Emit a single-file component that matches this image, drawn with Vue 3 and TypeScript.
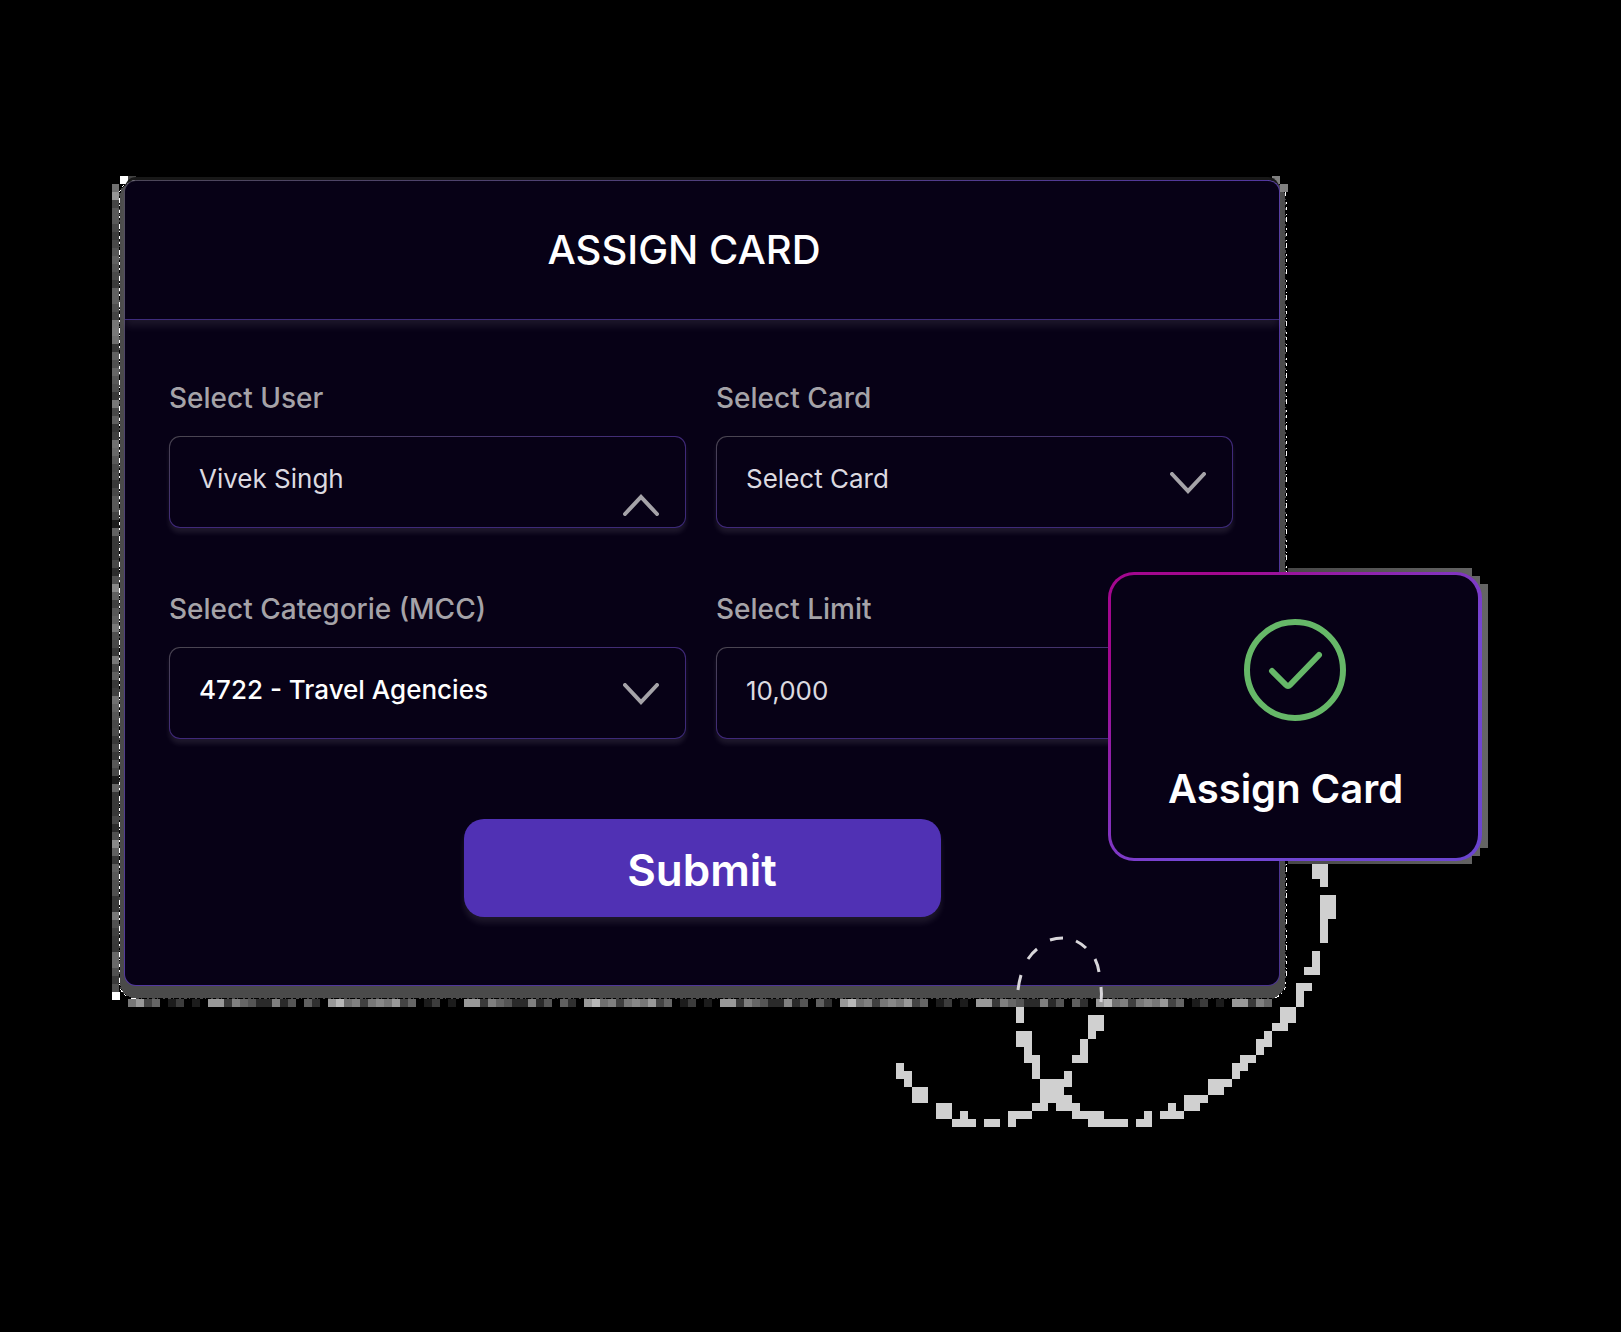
<script setup lang="ts">
import { ref } from 'vue'

const user = ref('Vivek Singh')
const card = ref('Select Card')
const category = ref('4722 - Travel Agencies')
const limit = ref('10,000')

/* Everything in the pixel trim sits on an 8px cell. */
const CELL = 8

const grey = (hex: string) => `#${hex}${hex}${hex}`

const leftEdge = (
  '70 95 45 58 58 48 3c 48 55 60 55 4a 3a 60 60 50 44 75 78 70 38 60 50 66 58 50 38 78 48 60 38 40 70 68 ' +
  '58 48 4c 38 48 58 58 44 1c 62 38 38 38 48 2c 50 88 60 40 58 60 78 50 48 38 78 48 60 38 40 70 62 58 48 ' +
  '4c 38 48 38 58 48 1c 66 38 38 38 48 2c 50 88 60 38 60 58 50 50 38 38 78 50 40 3a 38 68 68 50 3a 50 ff'
).split(' ')

const bottomPattern = (
  '77 99 44 66 00 1c 3c 00 1c 00 99 99 3a 80 66 55 2a 2a 80 2a 55 00 60 30 00 99 b8 70 80 40 77 88'
).split(' ')

/* Trail runs: row, first column, number of columns. */
const trail: number[][] = [
  [0, 54, 2], [1, 54, 2], [2, 55, 1], [4, 55, 2], [5, 55, 2], [6, 55, 2], [7, 55, 1], [8, 55, 1], [9, 55, 1],
  [11, 54, 1], [12, 54, 1], [13, 53, 2], [15, 52, 2], [16, 52, 1], [17, 52, 1], [18, 50, 2], [19, 50, 2],
  [20, 49, 2], [21, 48, 1], [22, 47, 2], [23, 47, 1], [24, 45, 2], [25, 44, 2], [26, 44, 1], [27, 41, 3],
  [28, 41, 2], [29, 38, 3], [30, 38, 2], [30, 36, 1], [31, 35, 3], [31, 33, 1], [32, 32, 2],
  [18, 17, 1], [19, 17, 1], [21, 17, 2], [22, 17, 2], [23, 18, 1], [24, 18, 2], [25, 19, 1], [26, 19, 1],
  [27, 20, 3], [28, 20, 3], [29, 20, 4], [26, 23, 1], [27, 23, 1], [30, 19, 2], [30, 22, 3], [31, 16, 3],
  [31, 24, 4], [32, 16, 1], [32, 26, 5],
  [19, 26, 2], [20, 26, 2], [21, 26, 1], [22, 25, 1], [23, 25, 1], [24, 24, 2],
  [25, 2, 1], [26, 2, 2], [27, 3, 1], [28, 4, 2], [29, 4, 2], [30, 7, 2], [31, 7, 2], [31, 10, 1],
  [32, 9, 3], [32, 13, 2]
]
</script>

<template>
  <main class="page">
    <div class="scene">
      <svg class="halo" aria-hidden="true">
        <defs>
          <pattern id="edge-noise" :width="CELL * 32" :height="CELL" patternUnits="userSpaceOnUse">
            <rect
              v-for="(tone, i) in bottomPattern"
              :key="i"
              :x="i * CELL"
              :width="CELL"
              :height="CELL"
              :fill="grey(tone)"
            />
          </pattern>
        </defs>
        <rect class="halo-fill" width="100%" height="100%" rx="17" />
        <rect class="speckle dark" width="100%" height="100%" rx="17" />
        <rect class="speckle light" width="100%" height="100%" rx="17" />
      </svg>
      <svg class="edge edge-left" aria-hidden="true">
        <rect
          v-for="(tone, i) in leftEdge"
          :key="i"
          :y="i * CELL"
          :width="i === leftEdge.length - 1 ? 8 : 7"
          :height="CELL"
          :fill="grey(tone)"
        />
      </svg>
      <svg class="edge edge-bottom" aria-hidden="true">
        <rect width="100%" height="8" fill="url(#edge-noise)" />
      </svg>
      <svg class="edge corner-left" aria-hidden="true">
        <rect width="8" height="8" fill="#fff" />
        <rect x="8" width="8" height="4" fill="#444" />
      </svg>
      <svg class="edge corner-right" aria-hidden="true">
        <rect width="8" height="8" fill="#808080" />
        <rect x="8" y="8" width="8" height="8" fill="#808080" />
      </svg>

      <form class="panel" @submit.prevent>
        <header class="panel-head">
          <h1>ASSIGN CARD</h1>
        </header>
        <div class="panel-body">
          <div class="fields">
            <div class="field">
              <label for="user">Select User</label>
              <div class="control">
                <select id="user" v-model="user">
                  <option>Vivek Singh</option>
                </select>
                <svg class="chevron open" viewBox="0 0 36 22" aria-hidden="true">
                  <path d="M2 2 18 19 34 2" />
                </svg>
              </div>
            </div>
            <div class="field">
              <label for="card">Select Card</label>
              <div class="control">
                <select id="card" v-model="card">
                  <option>Select Card</option>
                </select>
                <svg class="chevron" viewBox="0 0 36 22" aria-hidden="true">
                  <path d="M2 2 18 19 34 2" />
                </svg>
              </div>
            </div>
            <div class="field">
              <label for="category">Select Categorie (MCC)</label>
              <div class="control">
                <select id="category" v-model="category" class="strong">
                  <option>4722 - Travel Agencies</option>
                </select>
                <svg class="chevron" viewBox="0 0 36 22" aria-hidden="true">
                  <path d="M2 2 18 19 34 2" />
                </svg>
              </div>
            </div>
            <div class="field">
              <label for="limit">Select Limit</label>
              <div class="control">
                <input id="limit" v-model="limit" type="text" />
              </div>
            </div>
          </div>
          <button class="submit" type="submit">Submit</button>
        </div>
      </form>

      <svg class="trail" viewBox="0 0 456 264" aria-hidden="true">
        <g shape-rendering="crispEdges" fill="#d0d0d0">
          <rect
            v-for="([row, col, span], i) in trail"
            :key="i"
            :x="(col - 2) * CELL"
            :y="row * CELL"
            :width="span * CELL"
            :height="CELL"
          />
        </g>
        <path
          class="dashes"
          d="M122 127Q123 119 125 112M132 96Q136 90 141 86M154 77Q160 75 167 75M180 78Q186 81 190 85M199 96Q202 102 203 109M205 124Q206 131 205 139"
        />
      </svg>

      <svg class="toast-shadow" viewBox="0 0 200 296" aria-hidden="true">
        <defs>
          <linearGradient id="toast-edge">
            <stop offset="0" stop-color="#484848" />
            <stop offset="1" stop-color="#656565" />
          </linearGradient>
        </defs>
        <path fill="url(#toast-edge)" d="M0 0H184V8H192V16H200V280H192V288H184V296H0Z" />
      </svg>

      <section class="toast" role="status">
        <svg class="tick" viewBox="0 0 102 102" aria-hidden="true">
          <circle cx="51" cy="51" r="48" />
          <path d="M28 52 42 66Q44 68 46 66L75 36" />
        </svg>
        <p>Assign Card</p>
      </section>
    </div>
  </main>
</template>

<style>
html,
body {
  background: #000;
}
</style>

<style scoped>
.page {
  box-sizing: border-box;
  min-height: 100vh;
  padding: 180px 341px 180px 124px;
  background: #000;
  overflow: hidden;
  font-family: Inter, "Liberation Sans", sans-serif;
}

.scene {
  position: relative;
}

.halo,
.edge,
.trail,
.toast-shadow {
  position: absolute;
  overflow: visible;
  pointer-events: none;
}

.halo {
  top: 0;
  left: -5px;
  width: calc(100% + 11px);
  height: calc(100% + 13px);
}

.halo-fill {
  fill: #4a4a4a;
}

.speckle {
  fill: none;
  stroke-width: 1;
  shape-rendering: crispEdges;
}

.speckle.dark {
  stroke: #000;
  stroke-width: 2;
  stroke-dasharray: 3 2 5 1 2 3;
}

.speckle.light {
  stroke: #fff;
  stroke-dasharray: 3 4 1 2 5 6 2 3;
}

.edge {
  shape-rendering: crispEdges;
}

.edge-left {
  top: 4px;
  left: -12px;
  width: 8px;
  height: 100%;
}

.edge-bottom {
  left: 4px;
  bottom: -21px;
  width: calc(100% - 12px);
  height: 8px;
}

.corner-left {
  top: -4px;
  left: -4px;
  width: 16px;
  height: 8px;
}

.corner-right {
  top: -4px;
  right: -8px;
  width: 16px;
  height: 16px;
}

.panel {
  position: relative;
  box-sizing: border-box;
  border: 1px solid transparent;
  border-radius: 12px;
  background:
    linear-gradient(#070116, #070116) padding-box,
    linear-gradient(to bottom right, #4c4758, #5237a0 50%, #4b3490) border-box;
  box-shadow: 0 -4px 0 -1px #181818;
}

.panel-head {
  display: flex;
  align-items: center;
  justify-content: center;
  height: 139px;
  padding-right: 36px;
  box-sizing: border-box;
  border-bottom: 1px solid #3e2c7c;
  box-shadow: 0 6px 8px rgba(255, 255, 255, 0.09);
}

h1 {
  margin: 0;
  color: #fff;
  font-size: 40px;
  font-weight: 500;
  line-height: 48px;
}

.panel-body {
  display: flex;
  flex-direction: column;
  align-items: center;
  padding: 60px 46px 68px 44px;
}

.fields {
  display: grid;
  grid-template-columns: 1fr 1fr;
  gap: 63px 30px;
  width: 100%;
}

.field {
  display: flex;
  flex-direction: column;
  gap: 20px;
  min-width: 0;
}

label {
  color: #a5a3a8;
  font-size: 28px;
  font-weight: 500;
  line-height: 36px;
}

.control {
  position: relative;
  display: flex;
}

select,
input {
  appearance: none;
  box-sizing: border-box;
  width: 100%;
  height: 92px;
  margin: 0;
  padding: 0 80px 6px 29px;
  border: 1px solid transparent;
  border-radius: 11px;
  outline: none;
  background:
    linear-gradient(#070116, #070116) padding-box,
    linear-gradient(to bottom right, #4a4650, #40297a 50%, #3c2a78) border-box;
  box-shadow: 0 5px 5px rgba(255, 255, 255, 0.09);
  color: #dcdae0;
  font: 400 26px/32px Inter, "Liberation Sans", sans-serif;
}

select.strong {
  color: #fff;
  font-weight: 500;
}

.chevron {
  position: absolute;
  top: 36px;
  right: 27px;
  width: 36px;
  height: 22px;
  fill: none;
  stroke: #a5a3a8;
  stroke-width: 4;
  stroke-linecap: round;
  pointer-events: none;
}

.chevron.open {
  top: auto;
  bottom: 12px;
  rotate: 180deg;
}

.submit {
  width: 477px;
  max-width: 100%;
  height: 98px;
  margin: 80px 0 0 2px;
  padding: 4px 0 0;
  border: 0;
  border-radius: 20px;
  background: #5031b4;
  box-shadow: 0 6px 6px rgba(255, 255, 255, 0.09);
  color: #fff;
  font: 600 44px/52px Inter, "Liberation Sans", sans-serif;
}

.trail {
  right: -72px;
  bottom: -141px;
  width: 456px;
  height: 264px;
}

.dashes {
  fill: none;
  stroke: #d8d6da;
  stroke-width: 3;
}

.toast-shadow {
  top: 388px;
  right: -208px;
  width: 200px;
  height: 296px;
}

.toast {
  position: absolute;
  top: 392px;
  right: -202px;
  box-sizing: border-box;
  display: flex;
  flex-direction: column;
  align-items: center;
  width: 374px;
  height: 289px;
  padding-top: 44px;
  border: 3px solid transparent;
  border-right-width: 4px;
  border-radius: 26px;
  background:
    linear-gradient(#070116, #070116) padding-box,
    linear-gradient(to bottom right, #a3078f 15%, #7446d4 60%, #6a44d0) border-box;
}

.tick {
  width: 102px;
  height: 102px;
  fill: none;
  stroke: #66b868;
  stroke-width: 6;
  stroke-linecap: round;
}

.toast p {
  margin: 42px 18px 0 0;
  color: #fff;
  font-size: 40px;
  font-weight: 600;
  line-height: 52px;
}
</style>
